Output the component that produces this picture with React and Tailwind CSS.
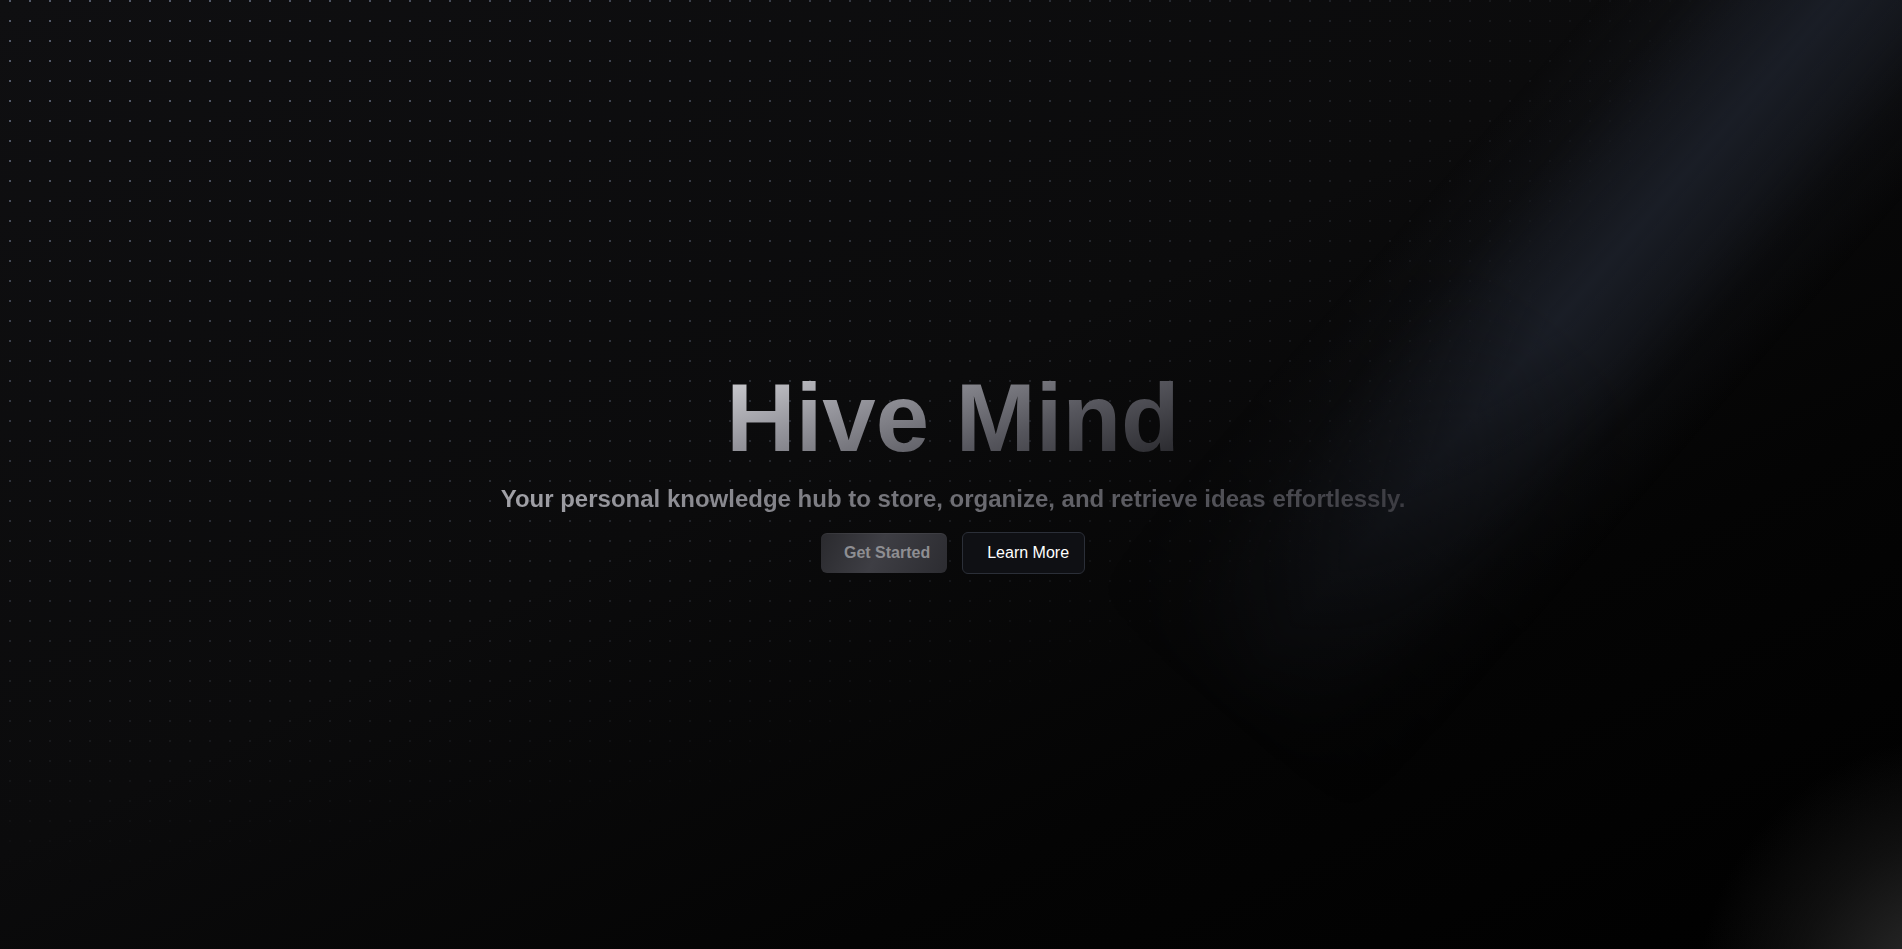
function DotGrid() {
  return (
    <div className="pointer-events-none absolute inset-0 bg-[radial-gradient(circle,#565c6b_1px,transparent_1.2px)] [background-size:20px_20px] [background-position:0_-9px] [mask-image:radial-gradient(ellipse_at_top_left,black_8%,rgba(0,0,0,0.5)_35%,transparent_66%)]" />
  );
}

// soft diagonal light beam from the top right corner
function Spotlight() {
  return (
    <>
      <div className="pointer-events-none absolute left-[995px] top-[40px] h-[360px] w-[1300px] -rotate-[49deg] bg-[linear-gradient(to_bottom,transparent_0%,rgba(27,31,40,0.2)_18%,rgba(27,31,40,0.6)_32%,rgba(27,31,40,0.95)_50%,rgba(27,31,40,0.6)_68%,rgba(27,31,40,0.2)_82%,transparent_100%)] [mask-image:linear-gradient(to_right,transparent_0%,rgba(0,0,0,0.45)_18%,black_40%,black_100%)]" />
      <div className="pointer-events-none absolute bottom-[-351px] right-[-358px] h-[600px] w-[600px] bg-[radial-gradient(circle_closest-side,#2c2c2c_0%,#232323_25%,rgba(26,26,26,0.6)_55%,transparent_88%)]" />
    </>
  );
}

export default function App() {
  return (
    <div className="relative min-h-screen w-full overflow-hidden bg-[linear-gradient(to_bottom_right,#0f0f11_0%,#0b0b0c_45%,#040404_72%,#000_100%)] [font-family:'Liberation_Sans',Arial,sans-serif]">
      <DotGrid />
      <Spotlight />
      <main className="relative z-10 flex min-h-screen flex-col items-center justify-center pb-[5px] pl-1">
        <h1 className="bg-[linear-gradient(160deg,#d4d4d8_0%,#96969d_30%,#55555c_65%,#222226_100%)] bg-clip-text text-8xl font-bold text-transparent">
          Hive Mind
        </h1>
        <p className="mt-[17px] bg-[linear-gradient(to_right,#a2a2a8,#6e6e74_50%,#3c3c42)] bg-clip-text text-2xl font-bold text-transparent">
          Your personal knowledge hub to store, organize, and retrieve ideas effortlessly.
        </p>
        <div className="mt-[17px] flex items-center gap-[15px]">
          <button className="h-10 rounded-md bg-[linear-gradient(115deg,#2a2a2e_0%,#3e3e44_45%,#2c2c31_100%)] pl-[23px] pr-[17px] text-base font-bold text-[#8e8e92] shadow-[inset_0_1px_0_rgba(255,255,255,0.05)]">
            Get Started
          </button>
          <button className="h-[42px] rounded-md border border-[#2b2f38] bg-[#0f1014] pl-6 pr-[15px] text-base text-white">
            Learn More
          </button>
        </div>
      </main>
    </div>
  );
}
